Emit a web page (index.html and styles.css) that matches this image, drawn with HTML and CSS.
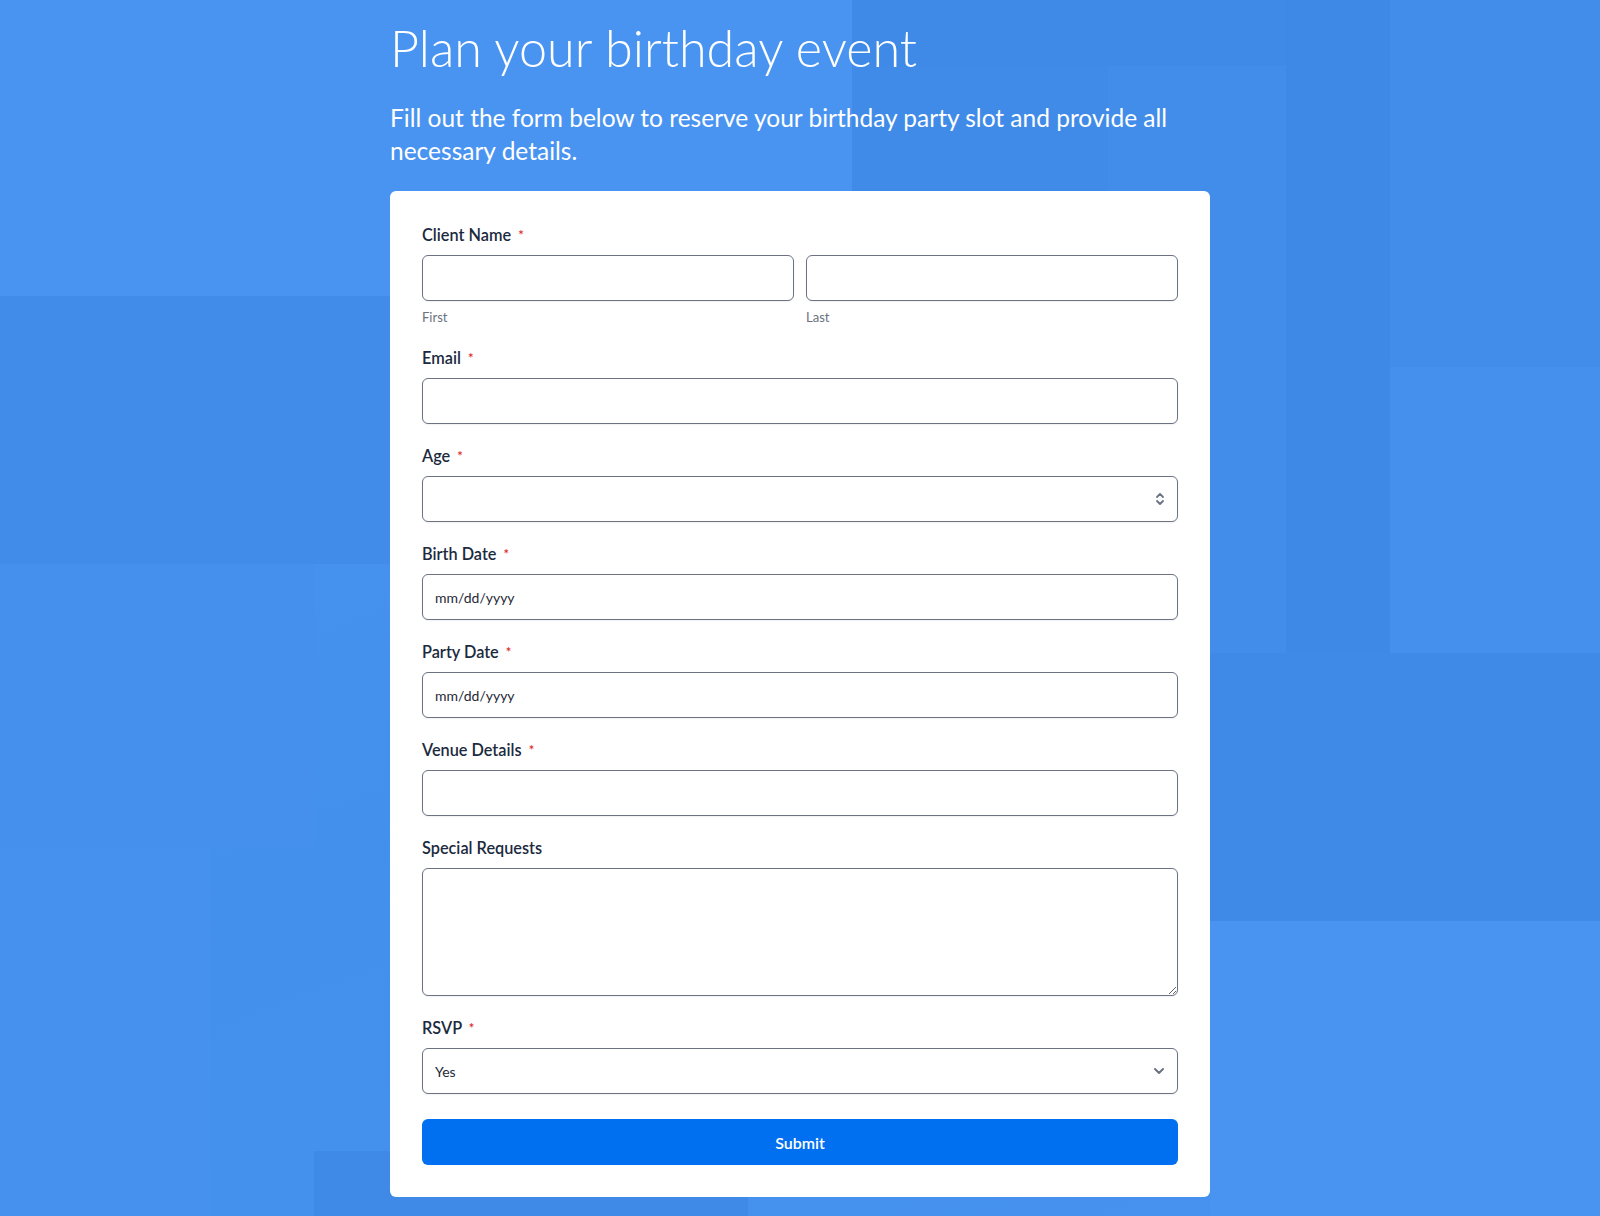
FILE: index.html
```html
<!DOCTYPE html>
<html lang="en">
<head>
<meta charset="utf-8">
<title>Plan your birthday event</title>
<link rel="stylesheet" href="styles.css">
</head>
<body>
<div class="backdrop" aria-hidden="true">
  <div class="shape s1"></div>
  <div class="shape s2"></div>
  <div class="shape s3"></div>
  <div class="shape s4"></div>
  <div class="shape s5"></div>
  <div class="shape s6"></div>
  <div class="shape s7"></div>
  <div class="shape s8"></div>
  <div class="shape s9"></div>
  <div class="shape s10"></div>
  <div class="shape s11"></div>
  <div class="shape s12"></div>
  <div class="shape s13"></div>
</div>
<main class="page">
  <h1 class="title">Plan your birthday event</h1>
  <p class="lead">Fill out the form below to reserve your birthday party slot and provide all necessary details.</p>
  <form class="card">
    <div class="field">
      <label class="label">Client Name <span class="req">*</span></label>
      <div class="name-row">
        <div class="name-col">
          <input class="input" type="text">
          <span class="hint">First</span>
        </div>
        <div class="name-col">
          <input class="input" type="text">
          <span class="hint">Last</span>
        </div>
      </div>
    </div>
    <div class="field">
      <label class="label">Email <span class="req">*</span></label>
      <input class="input" type="text">
    </div>
    <div class="field">
      <label class="label">Age <span class="req">*</span></label>
      <div class="control">
        <input class="input" type="text">
        <svg class="icon icon-spin" width="10" height="16" viewBox="0 0 10 16"><path d="M2 6 L5 3 L8 6 M2 10 L5 13 L8 10" fill="none" stroke="#6b7280" stroke-width="1.8" stroke-linecap="round" stroke-linejoin="round"/></svg>
      </div>
    </div>
    <div class="field">
      <label class="label">Birth Date <span class="req">*</span></label>
      <input class="input" type="text" placeholder="mm/dd/yyyy">
    </div>
    <div class="field">
      <label class="label">Party Date <span class="req">*</span></label>
      <input class="input" type="text" placeholder="mm/dd/yyyy">
    </div>
    <div class="field">
      <label class="label">Venue Details <span class="req">*</span></label>
      <input class="input" type="text">
    </div>
    <div class="field">
      <label class="label">Special Requests</label>
      <textarea class="input textarea"></textarea>
    </div>
    <div class="field">
      <label class="label">RSVP <span class="req">*</span></label>
      <div class="control">
        <select class="input select">
          <option>Yes</option>
          <option>No</option>
          <option>Maybe</option>
        </select>
        <svg class="icon icon-chev" width="12" height="8" viewBox="0 0 12 8"><path d="M2 2 L6 6 L10 2" fill="none" stroke="#6b7280" stroke-width="2" stroke-linecap="round" stroke-linejoin="round"/></svg>
      </div>
    </div>
    <button class="submit" type="button">Submit</button>
  </form>
</main>
</body>
</html>
```
FILE: styles.css
```css
* { box-sizing: border-box; }

html, body {
  margin: 0;
  padding: 0;
}

body {
  min-height: 1216px;
  background: linear-gradient(160deg, #4a94f1 0%, #4390ec 55%, #4692ee 100%);
  font-family: Lato, "Noto Sans", "Liberation Sans", sans-serif;
  color: #1e2a3b;
  position: relative;
  overflow: hidden;
}

.backdrop {
  position: absolute;
  inset: 0;
  z-index: 0;
}

.shape { position: absolute; }
.s1 { left: 0; top: 0; width: 852px; height: 296px; background: #4a94f1; }
.s2 { left: 852px; top: 0; width: 434px; height: 66px; background: #3f8ae7; }
.s3 { left: 852px; top: 66px; width: 256px; height: 300px; background: #418be8; }
.s4 { left: 1108px; top: 66px; width: 178px; height: 587px; background: #428dea; }
.s5 { left: 1286px; top: 0; width: 104px; height: 653px; background: #3e89e6; }
.s6 { left: 1390px; top: 0; width: 210px; height: 367px; background: #428dea; }
.s7 { left: 1390px; top: 367px; width: 210px; height: 286px; background: #4590ed; }
.s8 { left: 1210px; top: 653px; width: 390px; height: 268px; background: #3f8ae7; }
.s9 { left: 1210px; top: 921px; width: 390px; height: 295px; background: #4a94f1; }
.s10 { left: 0; top: 296px; width: 390px; height: 268px; background: #428ce9; }
.s11 { left: 0; top: 564px; width: 314px; height: 285px; background: #4590ed; }
.s12 { left: 0; top: 849px; width: 211px; height: 367px; background: #4691ee; }
.s13 { left: 314px; top: 1151px; width: 434px; height: 65px; background: #3f8ae7; }

.page {
  position: relative;
  z-index: 1;
  width: 820px;
  margin: 0 auto;
  padding-top: 18px;
}

.title {
  margin: 0 0 23px;
  font-size: 50.3px;
  line-height: 60px;
  font-weight: 300;
  color: #ffffff;
}

.lead {
  margin: 0 0 24px;
  font-size: 24.5px;
  line-height: 33px;
  font-weight: 400;
  color: #ffffff;
}

.card {
  background: #ffffff;
  border-radius: 6px;
  padding: 32px;
  display: flex;
  flex-direction: column;
}

.field {
  display: flex;
  flex-direction: column;
  margin-bottom: 20px;
}

.label {
  display: block;
  font-size: 16.3px;
  line-height: 24px;
  font-weight: 600;
  color: #1b2a3e;
  margin-bottom: 8px;
}

.req {
  color: #dc2626;
  font-size: 13px;
  margin-left: 3px;
  vertical-align: 1px;
}

.name-row {
  display: grid;
  grid-template-columns: 1fr 1fr;
  column-gap: 12px;
}

.name-col {
  display: flex;
  flex-direction: column;
}

.hint {
  margin-top: 7px;
  font-size: 13px;
  line-height: 18px;
  color: #6b7280;
}

.input {
  display: block;
  width: 100%;
  height: 46px;
  margin: 0;
  padding: 0 12px;
  border: 1px solid #6b7280;
  border-radius: 6px;
  background: #ffffff;
  box-shadow: 0 1px 2px rgba(0, 0, 0, 0.06);
  font-family: Lato, "Noto Sans", "Liberation Sans", sans-serif;
  font-size: 14px;
  color: #1f2937;
  outline: none;
}

.input::placeholder {
  color: #1f2937;
  opacity: 1;
}

.textarea {
  height: 128px;
  padding: 10px 12px;
  resize: vertical;
}

.select {
  appearance: none;
  -webkit-appearance: none;
  padding-right: 40px;
}

.control {
  position: relative;
}

.icon {
  position: absolute;
  top: 50%;
  transform: translateY(-50%);
  pointer-events: none;
}

.icon-spin { right: 13px; }
.icon-chev { right: 13px; }

.submit {
  margin-top: 5px;
  height: 46px;
  width: 100%;
  border: none;
  border-radius: 6px;
  background: #006ff0;
  color: #ffffff;
  font-family: Lato, "Noto Sans", "Liberation Sans", sans-serif;
  font-size: 16px;
  font-weight: 600;
  cursor: pointer;
}
```
